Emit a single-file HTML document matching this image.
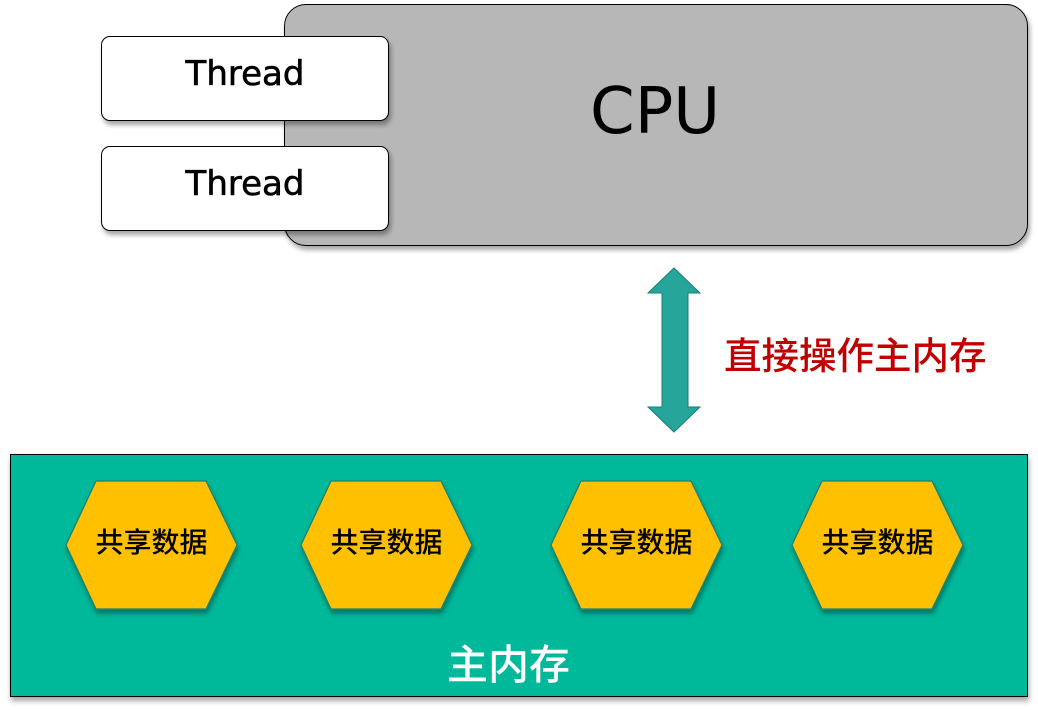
<!DOCTYPE html>
<html><head><meta charset="utf-8"><style>
body{margin:0;width:1038px;height:728px;background:#fff;position:relative;overflow:hidden;font-family:"Liberation Sans","Noto Sans CJK SC",sans-serif}
.cpu{position:absolute;left:284px;top:4px;width:742px;height:240px;background:#b7b7b7;border:1.5px solid #000;border-radius:22px;box-shadow:2px 4px 5px rgba(0,0,0,.35)}
.cpu span{position:absolute;left:305px;top:70px;font-size:64px;font-family:"DejaVu Sans",sans-serif;color:#000}
.th{position:absolute;left:101px;width:286px;height:83px;background:#fff;border:1.5px solid #000;border-radius:9px;box-shadow:2px 4px 5px rgba(0,0,0,.35);text-align:center;font-family:"DejaVu Sans",sans-serif;font-size:34px;line-height:74px;color:#000;-webkit-text-stroke:0.6px #000}
.mem{position:absolute;left:10px;top:454px;width:1016px;height:241px;background:#00b89a;border:1.5px solid #000;box-shadow:1px 4px 5px rgba(0,0,0,.35)}
.lbl{position:absolute;left:447px;top:634px;color:#fff;font-size:41px;font-family:"Noto Sans CJK SC",sans-serif;line-height:54px;font-weight:500}
.red{position:absolute;left:724px;top:328px;color:#c00000;font-size:37.5px;font-family:"Noto Sans CJK SC",sans-serif;line-height:50px;font-weight:500;white-space:nowrap}
.hx{position:absolute;font-size:28px;font-weight:500;font-family:"Noto Sans CJK SC",sans-serif;color:#000;width:171px;text-align:center;line-height:34px;white-space:nowrap}
</style></head><body>
<div class="cpu"><span>CPU</span></div>
<div class="th" style="top:36px">Thread</div>
<div class="th" style="top:146px">Thread</div>
<svg width="1038" height="728" style="position:absolute;left:0;top:0">
<polygon points="674,268 700,293 688,293 688,407 700,407 674,432 648,407 662,407 662,293 648,293" fill="#26a69a" stroke="#1a7f73" stroke-width="1"/>
</svg>
<div class="red">直接操作主内存</div>
<div class="mem"></div>
<svg width="1038" height="728" style="position:absolute;left:0;top:0">
<defs><filter id="s" x="-10%" y="-10%" width="130%" height="130%"><feDropShadow dx="1" dy="4" stdDeviation="2.5" flood-color="#000" flood-opacity=".35"/></filter></defs>
<g fill="#ffc000" stroke="#1f7f72" stroke-width="1.2" filter="url(#s)">
<polygon points="66,545 96,481 206,481 237,545 206,609 96,609"/>
<polygon points="301,545 331,481 441,481 472,545 441,609 331,609"/>
<polygon points="551,545 581,481 691,481 722,545 691,609 581,609"/>
<polygon points="792,545 822,481 932,481 963,545 932,609 822,609"/>
</g></svg>
<div class="hx" style="left:66px;top:524px">共享数据</div>
<div class="hx" style="left:301px;top:524px">共享数据</div>
<div class="hx" style="left:551px;top:524px">共享数据</div>
<div class="hx" style="left:792px;top:524px">共享数据</div>
<div class="lbl">主内存</div>
</body></html>
